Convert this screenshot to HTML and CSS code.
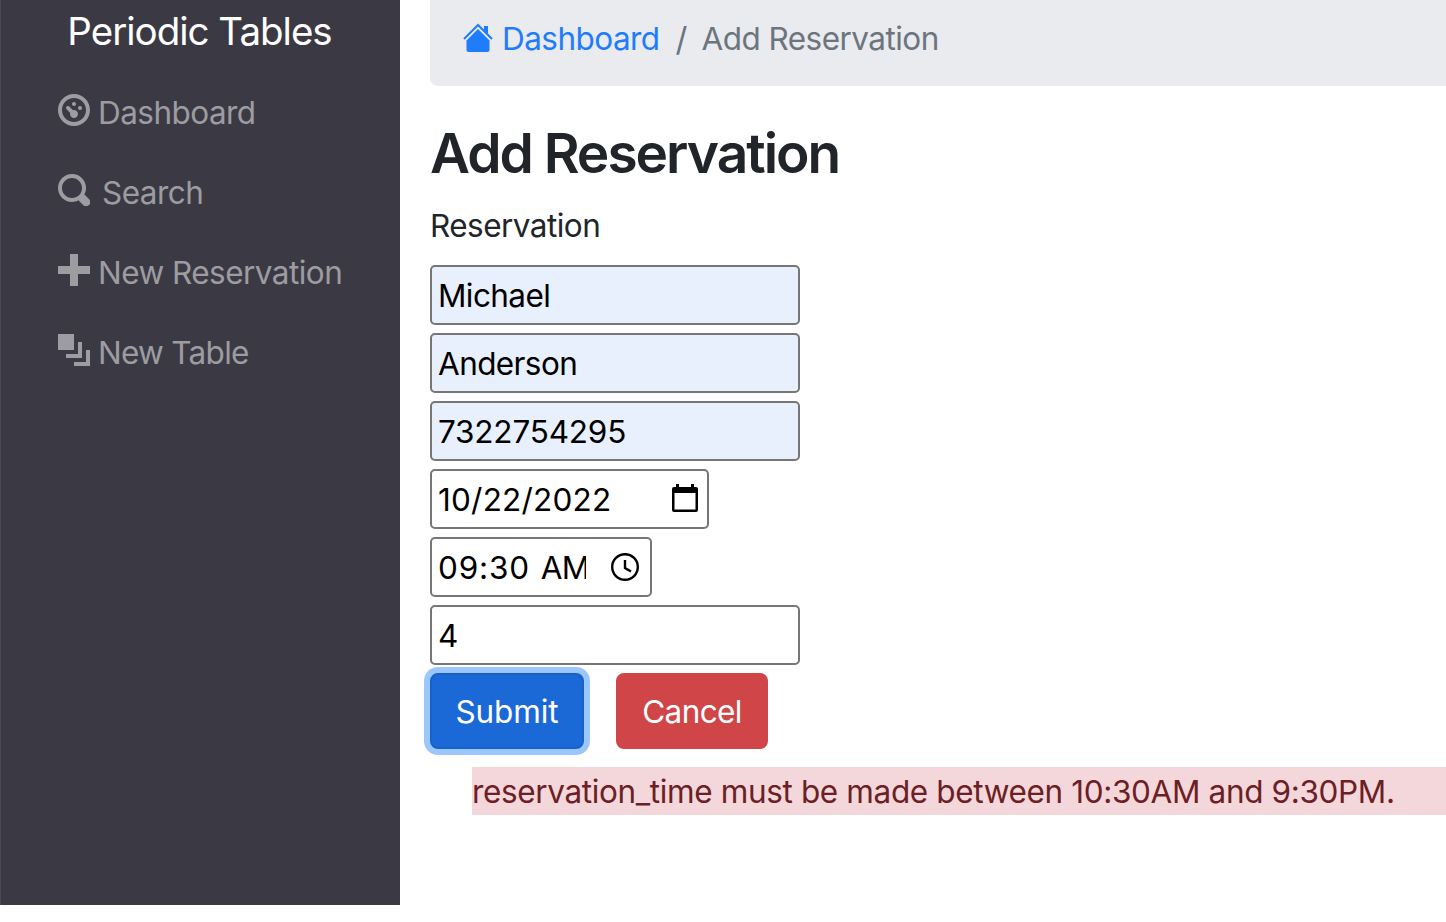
FILE: index.html
```html
<!DOCTYPE html>
<html lang="en">
<head>
<meta charset="utf-8">
<title>Periodic Tables</title>
<link rel="stylesheet" href="styles.css">
</head>
<body>
<div class="app">
  <nav class="sidebar">
    <a class="brand"><span>Periodic Tables</span></a>
    <ul class="menu">
      <li><svg viewBox="0 0 8 8"><path d="M4 0c-2.200 0-4 1.800-4 4s1.800 4 4 4 4-1.800 4-4-1.800-4-4-4zm0 1c1.660 0 3 1.340 3 3s-1.340 3-3 3-3-1.340-3-3 1.340-3 3-3zm0 1c-.28 0-.5.22-.5.5s.22.5.5.5.5-.22.5-.5-.22-.5-.5-.5zm-1.660 1a.5.5 0 0 0-.19.84l.91.91c-.02.08-.06.16-.06.25 0 .55.45 1 1 1s1-.45 1-1-.45-1-1-1c-.09 0-.17.04-.25.06l-.91-.91a.5.5 0 0 0-.44-.16.5.5 0 0 0-.06 0zm3.160 0c-.28 0-.5.22-.5.5s.22.5.5.5.5-.22.5-.5-.22-.5-.5-.5z"/></svg><span>Dashboard</span></li>
      <li><svg viewBox="0 0 8 8"><path d="M3.500 0c-1.930 0-3.500 1.570-3.500 3.500s1.570 3.500 3.500 3.500c.59 0 1.170-.14 1.660-.41a1 1 0 0 0 .13.13l1 1a1.020 1.020 0 1 0 1.440-1.440l-1-1a1 1 0 0 0-.16-.13c.27-.49.44-1.060.44-1.660 0-1.930-1.550-3.500-3.500-3.500zm0 1c1.390 0 2.500 1.110 2.500 2.500 0 .66-.24 1.270-.66 1.720l-.03.03a1 1 0 0 0-.13.13c-.44.4-1.040.63-1.690.63-1.390 0-2.500-1.110-2.500-2.500s1.110-2.500 2.500-2.500z"/></svg><span class="t-search">Search</span></li>
      <li><svg viewBox="0 0 8 8"><path d="M3 0v3h-3v2h3v3h2v-3h3v-2h-3v-3h-2z"/></svg><span>New Reservation</span></li>
      <li><svg viewBox="0 0 8 8"><path d="M0 0v4h4v-4h-4zm5 2v3h-3v1h4v-4h-1zm2 2v3h-3v1h4v-4h-1z"/></svg><span class="t-newtab">New Table</span></li>
    </ul>
  </nav>
  <main class="content">
    <div class="breadcrumb">
      <a class="home"><svg class="house" viewBox="0 0 30 30"><path d="M15 6 26.500 17.500v9.500q0 2-2 2h-19q-2 0-2-2v-9.500z"/><path d="M21 3h4v8l-4-4z"/><path class="roof" d="M1 16 15 2l14 14"/></svg><span>Dashboard</span></a>
      <span class="slash">/</span>
      <span>Add Reservation</span>
    </div>
    <h1><span>Add Reservation</span></h1>
    <form class="form">
      <label class="legend">Reservation</label>
      <input class="field filled" type="text" value="Michael">
      <input class="field filled" type="text" value="Anderson">
      <input class="field filled phone" type="text" value="7322754295">
      <div class="field date"><span class="value">10/22/2022</span><svg viewBox="0 0 26 28"><path fill-rule="evenodd" d="M4 0h3v3h12V0h3v3h2q2 0 2 2v21q0 2-2 2H2q-2 0-2-2V5q0-2 2-2h2zM2.500 9v16.500h21V9z"/></svg></div>
      <div class="field time"><span class="value">09:30<span class="ampm">AM</span></span><svg viewBox="0 0 28 28"><circle cx="14" cy="14" r="12.800"/><path d="M14 7v8l6 3.500"/></svg></div>
      <input class="field" type="text" value="4">
      <div class="actions">
        <button class="btn submit" type="button">Submit</button>
        <button class="btn cancel" type="button">Cancel</button>
      </div>
    </form>
    <p class="error"><span>reservation_time must be made between 10:30AM and 9:30PM.</span></p>
  </main>
</div>
</body>
</html>
```
FILE: styles.css
```css
* { box-sizing: border-box; }
body {
  margin: 0;
  background: #fff;
  color: #212529;
  font: 400 31.5px/48px Inter, "Liberation Sans", sans-serif;
  letter-spacing: -.54px;
  overflow: hidden;
}
.app { display: flex; height: 922px; }
.sidebar {
  flex: none;
  width: 400px;
  height: 905px;
  background: #3b3a44;
  border-left: 1px solid #4b4a53;
}
.brand {
  display: block;
  height: 72px;
  padding: 7px 2px 0 0;
  text-align: center;
  color: #fff;
  font-size: 38.500px;
  letter-spacing: -1px;
}
.menu { margin: 0; padding: 0 0 0 56.500px; list-style: none; color: #9c9ca1; }
.menu li { display: flex; height: 80px; padding-top: 17px; white-space: nowrap; }
.menu svg { width: 32px; height: 32px; margin: 5px 8.500px 0 0; fill: currentColor; }
.menu .t-search { margin-left: 4px; }
.t-newtab { letter-spacing: -.72px; }
.content { flex: none; width: 1046px; padding-left: 30px; }
.breadcrumb {
  display: flex;
  height: 86px;
  padding: 15px 0 0 32px;
  background: #e9ebef;
  border-radius: 0 0 0 8px;
  color: #6c757d;
  white-space: nowrap;
}
.home { display: flex; color: #1f7cfb; }
.house { width: 30px; height: 30px; margin: 8px 9px 0 1px; fill: currentColor; }
.roof { fill: none; stroke: currentColor; stroke-width: 2; }
.slash { margin: 0 14.500px 0 16px; font-size: 33px; }
h1 {
  height: 68px;
  margin: 33px 0 0;
  font-size: 55px;
  line-height: 68px;
  font-weight: 600;
  letter-spacing: -2px;
}
.form { display: flex; flex-direction: column; align-items: flex-start; gap: 8px; margin-top: 15px; }
.legend { height: 48px; margin-bottom: 7px; }
.field {
  display: flex;
  align-items: center;
  width: 370px;
  height: 60px;
  padding: 2px 6px;
  border: 2px solid #767676;
  border-radius: 5px;
  background: #fff;
  color: #000;
  font: inherit;
  letter-spacing: -.6px;
}
.filled { background: #e8f0fe; }
.phone { letter-spacing: -.2px; }
.value { padding-top: 2px; }
.date { width: 279px; justify-content: space-between; padding-right: 9px; letter-spacing: .2px; }
.date svg { width: 26px; height: 28px; margin-bottom: 2px; }
.time { width: 222px; justify-content: space-between; padding-right: 11px; letter-spacing: .8px; }
.time svg { width: 28px; height: 28px; fill: none; stroke: #000; stroke-width: 2.400; }
.time .value { width: 148px; overflow: hidden; white-space: nowrap; }
.ampm { margin-left: 11px; letter-spacing: -.8px; }
.actions { display: flex; gap: 32px; }
.btn {
  width: 154px;
  height: 76px;
  padding: 2px 0 0;
  border: 2px solid #1861c6;
  border-radius: 8px;
  background: #1b69d7;
  color: #fff;
  font: inherit;
  letter-spacing: -.1px;
}
.submit { box-shadow: 0 0 0 6px #9cc7fd; }
.cancel { width: 152px; background: #cf4548; border-color: #cf4548; letter-spacing: -.6px; }
.error {
  height: 48px;
  margin: 18px 0 0 42px;
  padding-top: 1px;
  background: #f4d7da;
  color: #6b2025;
  white-space: nowrap;
  letter-spacing: -.36px;
}
```
